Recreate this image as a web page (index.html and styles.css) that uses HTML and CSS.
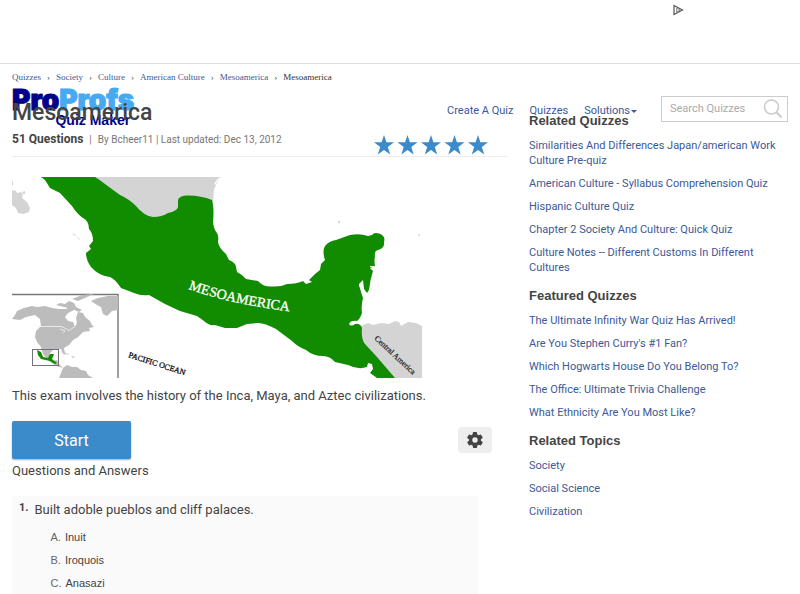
FILE: index.html
```html
<!DOCTYPE html>
<html lang="en">
<head>
<meta charset="utf-8">
<title>Mesoamerica Quiz</title>
<link rel="stylesheet" href="styles.css">
</head>
<body>
<div class="ad-bar">
  <svg class="ad-mark" viewBox="0 0 12 12" aria-hidden="true"><path d="M2 1.5 10.5 6 2 10.5Z" fill="none" stroke="#555" stroke-width="1.2"/><path d="M4.7 4.2v4L8 6.2Z" fill="none" stroke="#777" stroke-width=".9"/></svg>
</div>
<div class="page">
  <header class="site-header">
    <a class="logo" href="#"><span class="logo-name">Pro<span class="logo-light">Profs</span></span><span class="logo-sub">Quiz Maker</span></a>
    <nav class="site-nav">
      <a href="#">Create A Quiz</a>
      <a href="#">Quizzes</a>
      <a href="#" class="has-menu">Solutions</a>
    </nav>
    <form class="search">
      <input type="text" placeholder="Search Quizzes" aria-label="Search Quizzes">
      <button type="button" aria-label="Search"><svg viewBox="0 0 20 20"><circle cx="8.5" cy="8" r="7" fill="none" stroke="#ccc" stroke-width="1.6"/><path d="m13.5 13.3 5 5.2" stroke="#ccc" stroke-width="2"/></svg></button>
    </form>
  </header>
  <nav class="crumbs" aria-label="Breadcrumb">
    <a href="#">Quizzes</a><span>›</span><a href="#">Society</a><span>›</span><a href="#">Culture</a><span>›</span><a href="#">American Culture</a><span>›</span><a href="#">Mesoamerica</a><span>›</span><b>Mesoamerica</b>
  </nav>
  <div class="columns">
    <main class="quiz">
      <h1>Mesoamerica</h1>
      <div class="meta">
        <p><strong>51 Questions</strong><span class="bar">|</span>By Bcheer11 | Last updated: Dec 13, 2012</p>
        <svg class="stars" viewBox="0 0 114 20" role="img" aria-label="5 stars">
          <defs><path id="star" d="m10 0 2.4 7.3H20l-6.2 4.6 2.4 7.6L10 14.9l-6.2 4.6 2.4-7.6L0 7.3h7.6Z" fill="#3b8ac9"/></defs>
          <use href="#star"/><use href="#star" x="23.5"/><use href="#star" x="47"/><use href="#star" x="70.5"/><use href="#star" x="94"/>
        </svg>
      </div>
      <svg class="map" viewBox="12 177 410 201" role="img" aria-label="Map of Mesoamerica">
        <defs>
          <path id="meso-line" d="M188.500 289Q233 305 296 312"/>
        </defs>
        <g fill="#d4d4d4">
          <path d="M92 177h128l-3 6-3 6-1 14-24 2-13 12-28 6-40-26Z"/>
          <path d="M12 191l3-1 2 3 4-1 2 3-1 3 5 4 3 6-1 4-6 2-5-1-2-5-4-3Zm0-10 1 1v3l-1 1ZM22 192l3-1v3h-2ZM72 233l4 2-1 1ZM76 236l5 4-2-.500Z"/>
          <path d="M361 326l7-3 5 2 8-2 8 1 6-3 4 1 2 4 7-4 8 1 6 3v52h-32l-28-30Z"/>
          <circle cx="339" cy="222" r="1.200"/><circle cx="419" cy="235" r="1"/>
        </g>
        <path d="M214 184l4-6 1 1-4 6Z" fill="#fff"/>
        <path fill="#118c00" d="M41 177H95Q100 180 105 184L120 195Q129 199 136 206 144 216 153 217 162 217 168 213 177 211 178 207L178 200Q179 196 186 195.500 200 195 212 200L213 205Q214 212 213 222 214 230 217 233 219 236 218 242 219 248 226 254L229 260Q236 263 236 267L237 272Q243 275 246 279L258 281Q263 287 272 286.500 281 287 287 284 297 284 303 281L306 284 312 282 309 280 315 274 320 270 321 264 325 260Q322 251 325 246 329 241 336 240L350 235Q360 233 368 236L372 235Q374 232 379 233.500 386 236 384 242 385 248 378 250 374 251 375 256 374 261 375 266L370 268 373 271Q370 280 369 290L367 293 364 289 363 280 359 284 361 292 363 298Q361 306 362 313 360 319 357 321 351 320 349 324 351 327 355 324 360 323 362 328 361 339 365 344L377 357 395 378H377L370 373 373 369 372 364 368 363 367 367Q358 370 348 365L335 362Q330 356 323 356 313 356 306 350 298 347 292 341L276 329Q265 323 258 323L247 324 237 328 225 328 215 325Q209 326 204 321L197 316 180 311 165 304 149 295Q141 296 134 293L121 288Q115 279 110 277 99 276 91 267 86 260 86 253L91 249 89 246 93 241Q93 233 89 229 89 221 83 218 77 214 72 206L60 193 50 188 45 180Z"/>
        <path d="M359 283l1 3 2-3 2 9-1 1-4-7ZM370 266h4v1h-4Z" fill="#fff"/>
        <g>
          <path d="M12 294.500H118V378" fill="none" stroke="#777" stroke-width="1.400"/>
          <g fill="#bcbcbc">
            <path d="M12 319l3-4 2-4 7-3 8-2 5 1 8-1 7 2 7 1 7 0 5-3 3 4-6 3-3 4 3 4 5 1 2 5 2-4-1-5 2-6 5 1 2 4 5 4 1 3 3 3-5 1 1 3-7 1-5 5-5 3-4 5-5 3 1 6-1 1-3-6-8 1-3 3 0 5 3 3 4-1 2 4 4 4-7-2-7-5-6-7-2-7-4-5-2-5 1-6 5-5-1-7-5-4-9 2-6 3Z"/>
            <path d="M56 305l4-2 5 1 4-3 5 2 2 4 6 3-3 2-7-3-8-2ZM72 299l10-4 12-1-9 4-7 3ZM91 301l7-3 10-2h10v14l-6 1-5 5-4-2-2-7-4-2ZM82 325l8-3 2 3-7 3Z"/>
            <path d="M59 378l2-5 2-5 4-3 5 2h5l4 3 5 1 2 4 5 3ZM61 351l7 3 1 1-6-2ZM71 356l4 1-2 1Z"/>
          </g>
          <path d="M35 326.500h27l7 4 6-4M60 329l5 2-2 2" fill="none" stroke="#f4f4f4" stroke-width=".8"/>
          <path d="M37 350l4 2 2 5 5 1 2-4 4 0-2 5 5 4-2 1-5-3-9-2-3-4Z" fill="#118c00"/>
          <rect x="32.500" y="349.500" width="26" height="16" fill="none" stroke="#776f7a"/>
        </g>
        <text class="map-region"><textPath href="#meso-line">MESOAMERICA</textPath></text>
        <text class="map-ocean" transform="translate(128 357) rotate(18)">PACIFIC OCEAN</text>
        <text class="map-land" transform="translate(374 339) rotate(43)">Central America</text>
      </svg>
      <p class="intro">This exam involves the history of the Inca, Maya, and Aztec civilizations.</p>
      <div class="actions">
        <button class="start" type="button">Start</button>
        <button class="settings" type="button" aria-label="Settings"><svg viewBox="2 2 20 20"><path fill="#444" fill-rule="evenodd" d="M19.400 13a7.500 7.500 0 0 0 0-2l2.100-1.600a.5.5 0 0 0 .1-.6l-2-3.500a.5.5 0 0 0-.6-.2l-2.500 1a7.300 7.300 0 0 0-1.700-1l-.4-2.600a.5.5 0 0 0-.5-.5h-4a.5.500 0 0 0-.5.500L9 5.100a7.300 7.300 0 0 0-1.700 1l-2.500-1a.5.5 0 0 0-.6.200l-2 3.500a.5.5 0 0 0 .1.600L4.500 11a7.500 7.500 0 0 0 0 2l-2.100 1.600a.5.5 0 0 0-.1.600l2 3.500a.5.5 0 0 0 .6.200l2.500-1a7.300 7.300 0 0 0 1.700 1l.4 2.600a.5.5 0 0 0 .5.500h4a.5.5 0 0 0 .5-.5l.4-2.600a7.300 7.300 0 0 0 1.700-1l2.500 1a.5.5 0 0 0 .6-.2l2-3.500a.5.5 0 0 0-.1-.6ZM12 15.400a3.400 3.400 0 1 1 0-6.800 3.400 3.400 0 0 1 0 6.800Z"/></svg></button>
      </div>
      <h2 class="qa-title">Questions and Answers</h2>
      <section class="question">
        <span class="number">1.</span>
        <div>
          <p class="prompt">Built adoble pueblos and cliff palaces.</p>
          <ul class="options">
            <li><span>A.</span>Inuit</li>
            <li><span>B.</span>Iroquois</li>
            <li><span>C.</span>Anasazi</li>
          </ul>
        </div>
      </section>
    </main>
    <aside class="sidebar">
      <section>
        <h3>Related Quizzes</h3>
        <ul>
          <li><a href="#">Similarities And Differences Japan/american Work Culture Pre-quiz</a></li>
          <li><a href="#">American Culture - Syllabus Comprehension Quiz</a></li>
          <li><a href="#">Hispanic Culture Quiz</a></li>
          <li><a href="#">Chapter 2 Society And Culture: Quick Quiz</a></li>
          <li><a href="#">Culture Notes -- Different Customs In Different Cultures</a></li>
        </ul>
      </section>
      <section>
        <h3>Featured Quizzes</h3>
        <ul>
          <li><a href="#">The Ultimate Infinity War Quiz Has Arrived!</a></li>
          <li><a href="#">Are You Stephen Curry's #1 Fan?</a></li>
          <li><a href="#">Which Hogwarts House Do You Belong To?</a></li>
          <li><a href="#">The Office: Ultimate Trivia Challenge</a></li>
          <li><a href="#">What Ethnicity Are You Most Like?</a></li>
        </ul>
      </section>
      <section>
        <h3>Related Topics</h3>
        <ul>
          <li><a href="#">Society</a></li>
          <li><a href="#">Social Science</a></li>
          <li><a href="#">Civilization</a></li>
        </ul>
      </section>
    </aside>
  </div>
</div>
</body>
</html>
```
FILE: styles.css
```css
* { box-sizing: border-box; }
body {
  margin: 0;
  min-height: 100vh;
  display: flex;
  flex-direction: column;
  background: #fff;
  color: #444;
  font-family: Roboto, "Liberation Sans", sans-serif;
  font-size: 11px;
}
h1, h2, h3, p, ul { margin: 0; padding: 0; }
ul { list-style: none; }
a { color: #3b5998; text-decoration: none; }
button { border: 0; padding: 0; font-family: inherit; }
svg { display: block; }

.ad-bar {
  height: 64px;
  padding: 4px 116px 0 0;
  border-bottom: 1px solid #ddd;
  display: flex;
  justify-content: flex-end;
}
.ad-mark { width: 12px; height: 12px; }

.page {
  position: relative;
  flex: 1;
  display: flex;
  flex-direction: column;
  padding: 5px 12px 0;
}
.crumbs {
  display: flex;
  gap: 6px;
  font: 9px/16px "Liberation Serif", serif;
}
.crumbs b { font-weight: 400; color: #333; }

/* The header floats above the title row. */
.site-header {
  position: absolute;
  inset: 20px 12px auto;
  display: flex;
  align-items: flex-start;
}
.logo {
  display: flex;
  flex-direction: column;
  margin-right: auto;
  color: #00008b;
}
.logo-name { font: 900 28px/32px Inter, sans-serif; -webkit-text-stroke: 1px; }
.logo-light { color: #45aaf2; }
.logo-sub { align-self: flex-end; margin: -4px 4px 0 0; font: 700 14px/16px "Liberation Sans", sans-serif; }
.site-nav {
  display: flex;
  gap: 16px;
  margin: 19px 24px 0 0;
  line-height: 16px;
}
.has-menu { display: flex; align-items: center; gap: 1px; }
.has-menu::after {
  content: "";
  border: 3px solid transparent;
  border-top-color: #3b5998;
  border-bottom: 0;
}
.search {
  display: flex;
  align-items: center;
  width: 127px;
  height: 26px;
  margin-top: 12px;
  padding: 0 4px 0 8px;
  border: 1px solid #ccc;
  background: #fff;
}
.search input {
  flex: 1;
  min-width: 0;
  border: 0;
  padding: 0;
  outline: 0;
  background: none;
  font: 11px/16px Roboto, sans-serif;
}
.search input::placeholder { color: #aaa; opacity: 1; }
.search button { background: none; }
.search svg { width: 20px; height: 20px; }

.columns {
  flex: 1;
  display: grid;
  grid-template-columns: minmax(0, 495fr) minmax(0, 259fr);
  column-gap: 22px;
}
.quiz { display: flex; flex-direction: column; padding-top: 14px; }
h1 { position: relative; z-index: 1; font-size: 23px; line-height: 28px; font-weight: 500; }
.meta {
  display: flex;
  justify-content: space-between;
  margin-top: 4px;
  padding: 0 19px 0 0;
  height: 26px;
  border-bottom: 1px solid #eee;
  font-size: 10px;
  line-height: 16px;
  color: #777;
}
.meta strong { font-size: 12px; color: #444; }
.bar { margin: 0 6px; }
.stars { width: 114px; height: 20px; margin-top: 4px; }
.map { width: 410px; max-width: 100%; margin-top: 20px; }
.map text { font-family: "Liberation Serif", serif; }
.map .map-region { font-size: 14px; fill: #fff; stroke: #fff; stroke-width: .3px; }
.map .map-ocean { font-size: 8px; fill: #111; stroke: #111; stroke-width: .3px; }
.map .map-land { font-size: 8px; fill: #222; stroke: #222; stroke-width: .2px; }
.intro { margin-top: 8px; font-size: 13px; line-height: 20px; }
.actions {
  display: flex;
  align-items: center;
  justify-content: space-between;
  margin: 15px 15px 2px 0;
}
.start {
  width: 119px;
  height: 38px;
  border-radius: 2px;
  background: #3b8ac9;
  box-shadow: 0 1px 2px #0005;
  color: #fff;
  font-size: 16px;
}
.settings {
  display: grid;
  place-items: center;
  width: 34px;
  height: 26px;
  border-radius: 4px;
  background: #eee;
}
.settings svg { width: 16px; height: 16px; }
.qa-title { font-size: 13px; line-height: 20px; font-weight: 400; }
.question {
  flex: 1;
  display: flex;
  gap: 6px;
  margin: 15px 29px 0 0;
  padding: 4px 7px 0;
  background: #fafafa;
}
.number { font-size: 11px; line-height: 16px; font-weight: 700; }
.prompt { font-size: 13px; line-height: 20px; }
.options { padding: 6px 0 0 16px; font: 11px/23px "Liberation Sans", sans-serif; }
.options li { display: flex; gap: 4px; }
.options span { color: #666; }

.sidebar { padding-top: 28px; display: flex; flex-direction: column; gap: 13px; }
.sidebar h3 {
  margin-bottom: 9px;
  font: 700 13px/16px "Liberation Sans", sans-serif;
}
.sidebar ul { display: grid; gap: 8px; line-height: 15px; }
```
